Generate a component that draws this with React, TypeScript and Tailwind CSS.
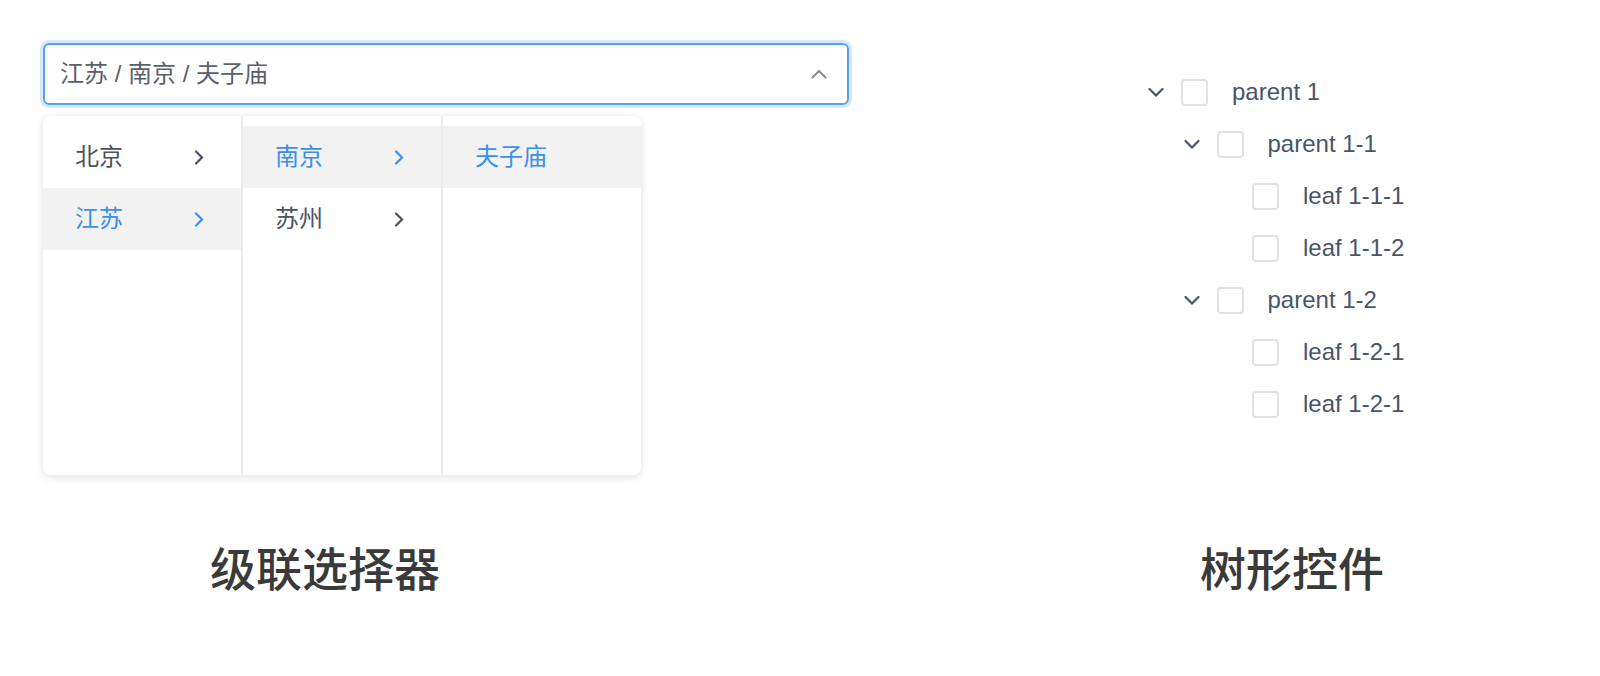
import React from 'react';

const FONT = "font-['Liberation_Sans','Noto_Sans_CJK_SC',sans-serif]";

interface Node {
  label: string;
  level: number;
  expandable?: boolean;
}

const TREE: Node[] = [
  { label: 'parent 1', level: 0, expandable: true },
  { label: 'parent 1-1', level: 1, expandable: true },
  { label: 'leaf 1-1-1', level: 2 },
  { label: 'leaf 1-1-2', level: 2 },
  { label: 'parent 1-2', level: 1, expandable: true },
  { label: 'leaf 1-2-1', level: 2 },
  { label: 'leaf 1-2-1', level: 2 },
];

const COLUMNS = [
  [
    { label: '北京', active: false, hasChildren: true },
    { label: '江苏', active: true, hasChildren: true },
  ],
  [
    { label: '南京', active: true, hasChildren: true },
    { label: '苏州', active: false, hasChildren: true },
  ],
  [{ label: '夫子庙', active: true, hasChildren: false }],
];

export default function App() {
  return (
    <div className={`w-[1600px] h-[676px] bg-white overflow-hidden ${FONT}`}>
      <div className="flex h-[543px]">
        <div className="w-[1148px] shrink-0 pl-[43px] pt-[43px]">
          <Cascader />
        </div>
        <div className="pt-[66px]">
          {TREE.map((n, i) => (
            <TreeRow key={i} node={n} />
          ))}
        </div>
      </div>
      <div className="flex font-['Noto_Sans_CJK_SC',sans-serif] text-[46px] leading-[46px] font-medium text-[#3a3a3a]">
        <div className="w-[1200px] shrink-0 pl-[210px]">级联选择器</div>
        <div>树形控件</div>
      </div>
    </div>
  );
}

function Cascader() {
  return (
    <div>
      <div className="flex h-[62px] w-[806px] items-center justify-between rounded-[6px] border-2 border-[#56a0f2] pl-[15px] pr-[20px] ring-[3px] ring-[#d5e7fc]">
        <span className="text-[24px] text-[#5a606c]">江苏 / 南京 / 夫子庙</span>
        <ChevronUp />
      </div>
      <div className="mt-[11px] flex h-[359px] w-[598px] overflow-hidden rounded-[8px] bg-white shadow-[0_2px_10px_rgba(0,0,0,0.12)]">
        {COLUMNS.map((col, ci) => (
          <div
            key={ci}
            className={`pt-[10px] ${ci < 2 ? 'w-[200px] shrink-0 border-r-2 border-[#ebebeb]' : 'flex-1'}`}
          >
            {col.map((item) => (
              <div
                key={item.label}
                className={`flex h-[62px] items-center justify-between pl-[32px] pr-[37px] text-[24px] ${
                  item.active ? 'bg-[#f2f2f2] text-[#3a8ef0]' : 'text-[#4a5262]'
                }`}
              >
                <span>{item.label}</span>
                {item.hasChildren ? <ChevronRight /> : null}
              </div>
            ))}
          </div>
        ))}
      </div>
    </div>
  );
}

function TreeRow({ node }: { node: Node }) {
  return (
    <div className="flex h-[52px] items-center" style={{ paddingLeft: node.level * 35.5 }}>
      <div className="w-[33px] shrink-0">{node.expandable ? <ChevronDown /> : null}</div>
      <div className="h-[27px] w-[27px] shrink-0 rounded-[4px] border-2 border-[#e0e2e6] bg-white" />
      <span className="ml-[24px] text-[24px] text-[#4a5468]">{node.label}</span>
    </div>
  );
}

function ChevronUp() {
  return (
    <svg width="16" height="10" viewBox="0 0 16 10" fill="none" aria-hidden>
      <path d="M1.5 8.5L8 2l6.5 6.5" stroke="#8a8f99" strokeWidth="2.2" strokeLinecap="round" />
    </svg>
  );
}

function ChevronRight() {
  return (
    <svg width="10" height="15" viewBox="0 0 10 15" fill="none" aria-hidden>
      <path d="M2 1.5L8 7.5l-6 6" stroke="currentColor" strokeWidth="2.2" strokeLinecap="round" />
    </svg>
  );
}

function ChevronDown() {
  return (
    <svg width="16" height="10" viewBox="0 0 16 10" fill="none" aria-hidden>
      <path d="M1.5 2L8 8.5 14.5 2" stroke="#4a5468" strokeWidth="2.2" strokeLinecap="round" />
    </svg>
  );
}
